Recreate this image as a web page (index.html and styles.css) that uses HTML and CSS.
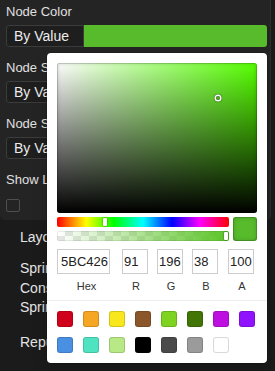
FILE: index.html
```html
<!DOCTYPE html>
<html lang="en">

<head>
    <meta charset="UTF-8">
    <meta name="viewport" content="width=device-width, initial-scale=1.0">
    <title>Graph Settings</title>
    <link rel="stylesheet" href="styles.css">
</head>

<body>
    <div id="settings">
        <div class="field">
            <div class="label">Node Color</div>
            <div class="row">
                <div class="select">By Value</div>
                <div class="colorbar"></div>
            </div>
        </div>
        <div class="field">
            <div class="label">Node Size</div>
            <div class="row">
                <div class="select wide">By Value</div>
            </div>
        </div>
        <div class="field">
            <div class="label">Node Shape</div>
            <div class="row">
                <div class="select wide">By Value</div>
            </div>
        </div>
        <div class="field">
            <div class="label">Show Labels</div>
            <div class="check"></div>
        </div>
    </div>

    <div id="layout">
        <div class="heading">Layout</div>
        <div class="group">
            <div>Spring Length</div>
            <div>Constant</div>
            <div>Spring Coefficient</div>
        </div>
        <div class="heading">Repulsion</div>
    </div>

    <!-- colour picker popover, sits over the settings -->
    <div id="picker">
        <div class="saturation">
            <div class="sat-white"></div>
            <div class="sat-black"></div>
            <div class="sat-pointer"></div>
        </div>
        <div class="sliders">
            <div class="bars">
                <div class="hue"><div class="slider-pointer hue-pointer"></div></div>
                <div class="alpha"><div class="slider-pointer alpha-pointer"></div></div>
            </div>
            <div class="current"></div>
        </div>
        <div class="fields">
            <div class="cell hex"><input value="5BC426"><span>Hex</span></div>
            <div class="cell r"><input value="91"><span>R</span></div>
            <div class="cell g"><input value="196"><span>G</span></div>
            <div class="cell b"><input value="38"><span>B</span></div>
            <div class="cell a"><input value="100"><span>A</span></div>
        </div>
        <div class="presets">
            <div class="swatch" style="background:#D0021B"></div>
            <div class="swatch" style="background:#F5A623"></div>
            <div class="swatch" style="background:#F8E71C"></div>
            <div class="swatch" style="background:#8B572A"></div>
            <div class="swatch" style="background:#7ED321"></div>
            <div class="swatch" style="background:#417505"></div>
            <div class="swatch" style="background:#BD10E0"></div>
            <div class="swatch" style="background:#9013FE"></div>
            <div class="swatch" style="background:#4A90E2"></div>
            <div class="swatch" style="background:#50E3C2"></div>
            <div class="swatch" style="background:#B8E986"></div>
            <div class="swatch" style="background:#000000"></div>
            <div class="swatch" style="background:#4A4A4A"></div>
            <div class="swatch" style="background:#9B9B9B"></div>
            <div class="swatch" style="background:#FFFFFF"></div>
        </div>
    </div>
</body>

</html>
```

FILE: styles.css
```css
html, body {
    margin: 0;
    height: 100%;
    overflow: hidden;
    background-color: #1b1b1b;
    font-family: "Liberation Sans", Arial, sans-serif;
    color: #e0e0e0;
}

#settings {
    width: 261px;
    margin-left: 0;
    padding: 3px 3px 8px 6px;
    background-color: #242424;
    border-right: 1px solid #2e2e2e;
    border-radius: 0 0 5px 5px;
}

.field {
    margin-bottom: 12px;
}

.field:last-child {
    margin-bottom: 0;
}

.label {
    height: 18px;
    line-height: 18px;
    font-size: 13px;
    margin-bottom: 4px;
    white-space: nowrap;
}

.row {
    display: flex;
    height: 22px;
}

.select {
    box-sizing: border-box;
    width: 78px;
    height: 22px;
    line-height: 20px;
    padding-left: 7px;
    font-size: 14px;
    color: #ececec;
    background-color: #1e1e1e;
    border: 1px solid #3b3b3b;
    border-radius: 3px 0 0 3px;
    white-space: nowrap;
}

.select.wide {
    flex: 1;
    border-radius: 3px;
}

.colorbar {
    flex: 1;
    background-color: #57bb2c;
    border-radius: 0 3px 3px 0;
}

.check {
    box-sizing: border-box;
    width: 14px;
    height: 13px;
    margin-top: 10px;
    border: 1px solid #4e4e4e;
    border-radius: 2px;
}

#layout {
    padding: 7px 0 0 20px;
    font-size: 14px;
    line-height: 20px;
    color: #e4e4e4;
}

.group {
    margin: 12px 0 14px;
    line-height: 19.5px;
}

/* picker */

#picker {
    position: absolute;
    left: 47px;
    top: 53px;
    width: 200px;
    padding: 10px 10px 0;
    background: #fff;
    border-radius: 4px;
    box-shadow: 0 0 0 1px rgba(0, 0, 0, 0.15), 0 8px 16px rgba(0, 0, 0, 0.15);
}

.saturation {
    position: relative;
    height: 150px;
    border-radius: 3px;
    overflow: hidden;
    background: hsl(100, 100%, 50%);
}

.sat-white, .sat-black {
    position: absolute;
    inset: 0;
}

.sat-white {
    background: linear-gradient(to right, #fff, rgba(255, 255, 255, 0));
}

.sat-black {
    background: linear-gradient(to top, #000, rgba(0, 0, 0, 0));
    box-shadow: inset 0 0 0 1px rgba(0, 0, 0, 0.15), inset 0 0 4px rgba(0, 0, 0, 0.25);
}

.sat-pointer {
    position: absolute;
    left: 161px;
    top: 35px;
    width: 4px;
    height: 4px;
    border-radius: 50%;
    transform: translate(-2px, -2px);
    box-shadow: 0 0 0 1.5px #fff, inset 0 0 1px 1px rgba(0, 0, 0, 0.3), 0 0 1px 2px rgba(0, 0, 0, 0.4);
}

.sliders {
    display: flex;
    padding: 4px 0;
}

.bars {
    flex: 1;
}

.hue, .alpha {
    position: relative;
    height: 10px;
    border-radius: 2px;
}

.hue {
    background: linear-gradient(to right, #f00 0%, #ff0 17%, #0f0 33%, #0ff 50%, #00f 67%, #f0f 83%, #f00 100%);
}

.alpha {
    margin-top: 4px;
    background:
        linear-gradient(to right, rgba(91, 196, 38, 0), rgb(91, 196, 38)),
        conic-gradient(#e6e6e6 25%, #fff 0 50%, #e6e6e6 0 75%, #fff 0) 0 0 / 16px 10px;
    box-shadow: inset 0 0 0 1px rgba(0, 0, 0, 0.08);
}

.slider-pointer {
    position: absolute;
    top: 1px;
    width: 4px;
    height: 8px;
    background: #fff;
    border-radius: 1px;
    box-shadow: 0 0 2px rgba(0, 0, 0, 0.6);
}

.hue-pointer {
    left: 46px;
}

.alpha-pointer {
    left: 167px;
}

.current {
    width: 24px;
    height: 24px;
    margin-left: 4px;
    border-radius: 3px;
    background: #57bb2c;
    box-shadow: inset 0 0 0 1px rgba(0, 0, 0, 0.15), inset 0 0 4px rgba(0, 0, 0, 0.25);
}

.fields {
    display: flex;
    padding-top: 4px;
}

.cell {
    display: flex;
    flex-direction: column;
    align-items: center;
}

.cell input {
    box-sizing: border-box;
    width: 26px;
    height: 25px;
    padding: 0 0 0 2px;
    border: none;
    outline: none;
    box-shadow: inset 0 0 0 1px #ccc;
    font-family: "Liberation Sans", Arial, sans-serif;
    font-size: 13px;
    color: #222;
}

.cell span {
    display: block;
    padding: 3px 0 4px 2px;
    line-height: 19px;
    font-size: 11px;
    color: #333;
}

.cell.hex input {
    width: 53px;
    padding-left: 4px;
}

.cell.hex span {
    padding-left: 6px;
}

.cell.r {
    margin-left: 12px;
}

.cell.g, .cell.b {
    margin-left: 9px;
}

.cell.a {
    margin-left: 10px;
}

.presets {
    display: flex;
    flex-wrap: wrap;
    margin: 0 -10px;
    padding: 10px 0 0 10px;
    border-top: 1px solid #eee;
}

.swatch {
    width: 16px;
    height: 16px;
    margin: 0 10px 10px 0;
    border-radius: 3px;
    box-shadow: inset 0 0 0 1px rgba(0, 0, 0, 0.15);
}
```
